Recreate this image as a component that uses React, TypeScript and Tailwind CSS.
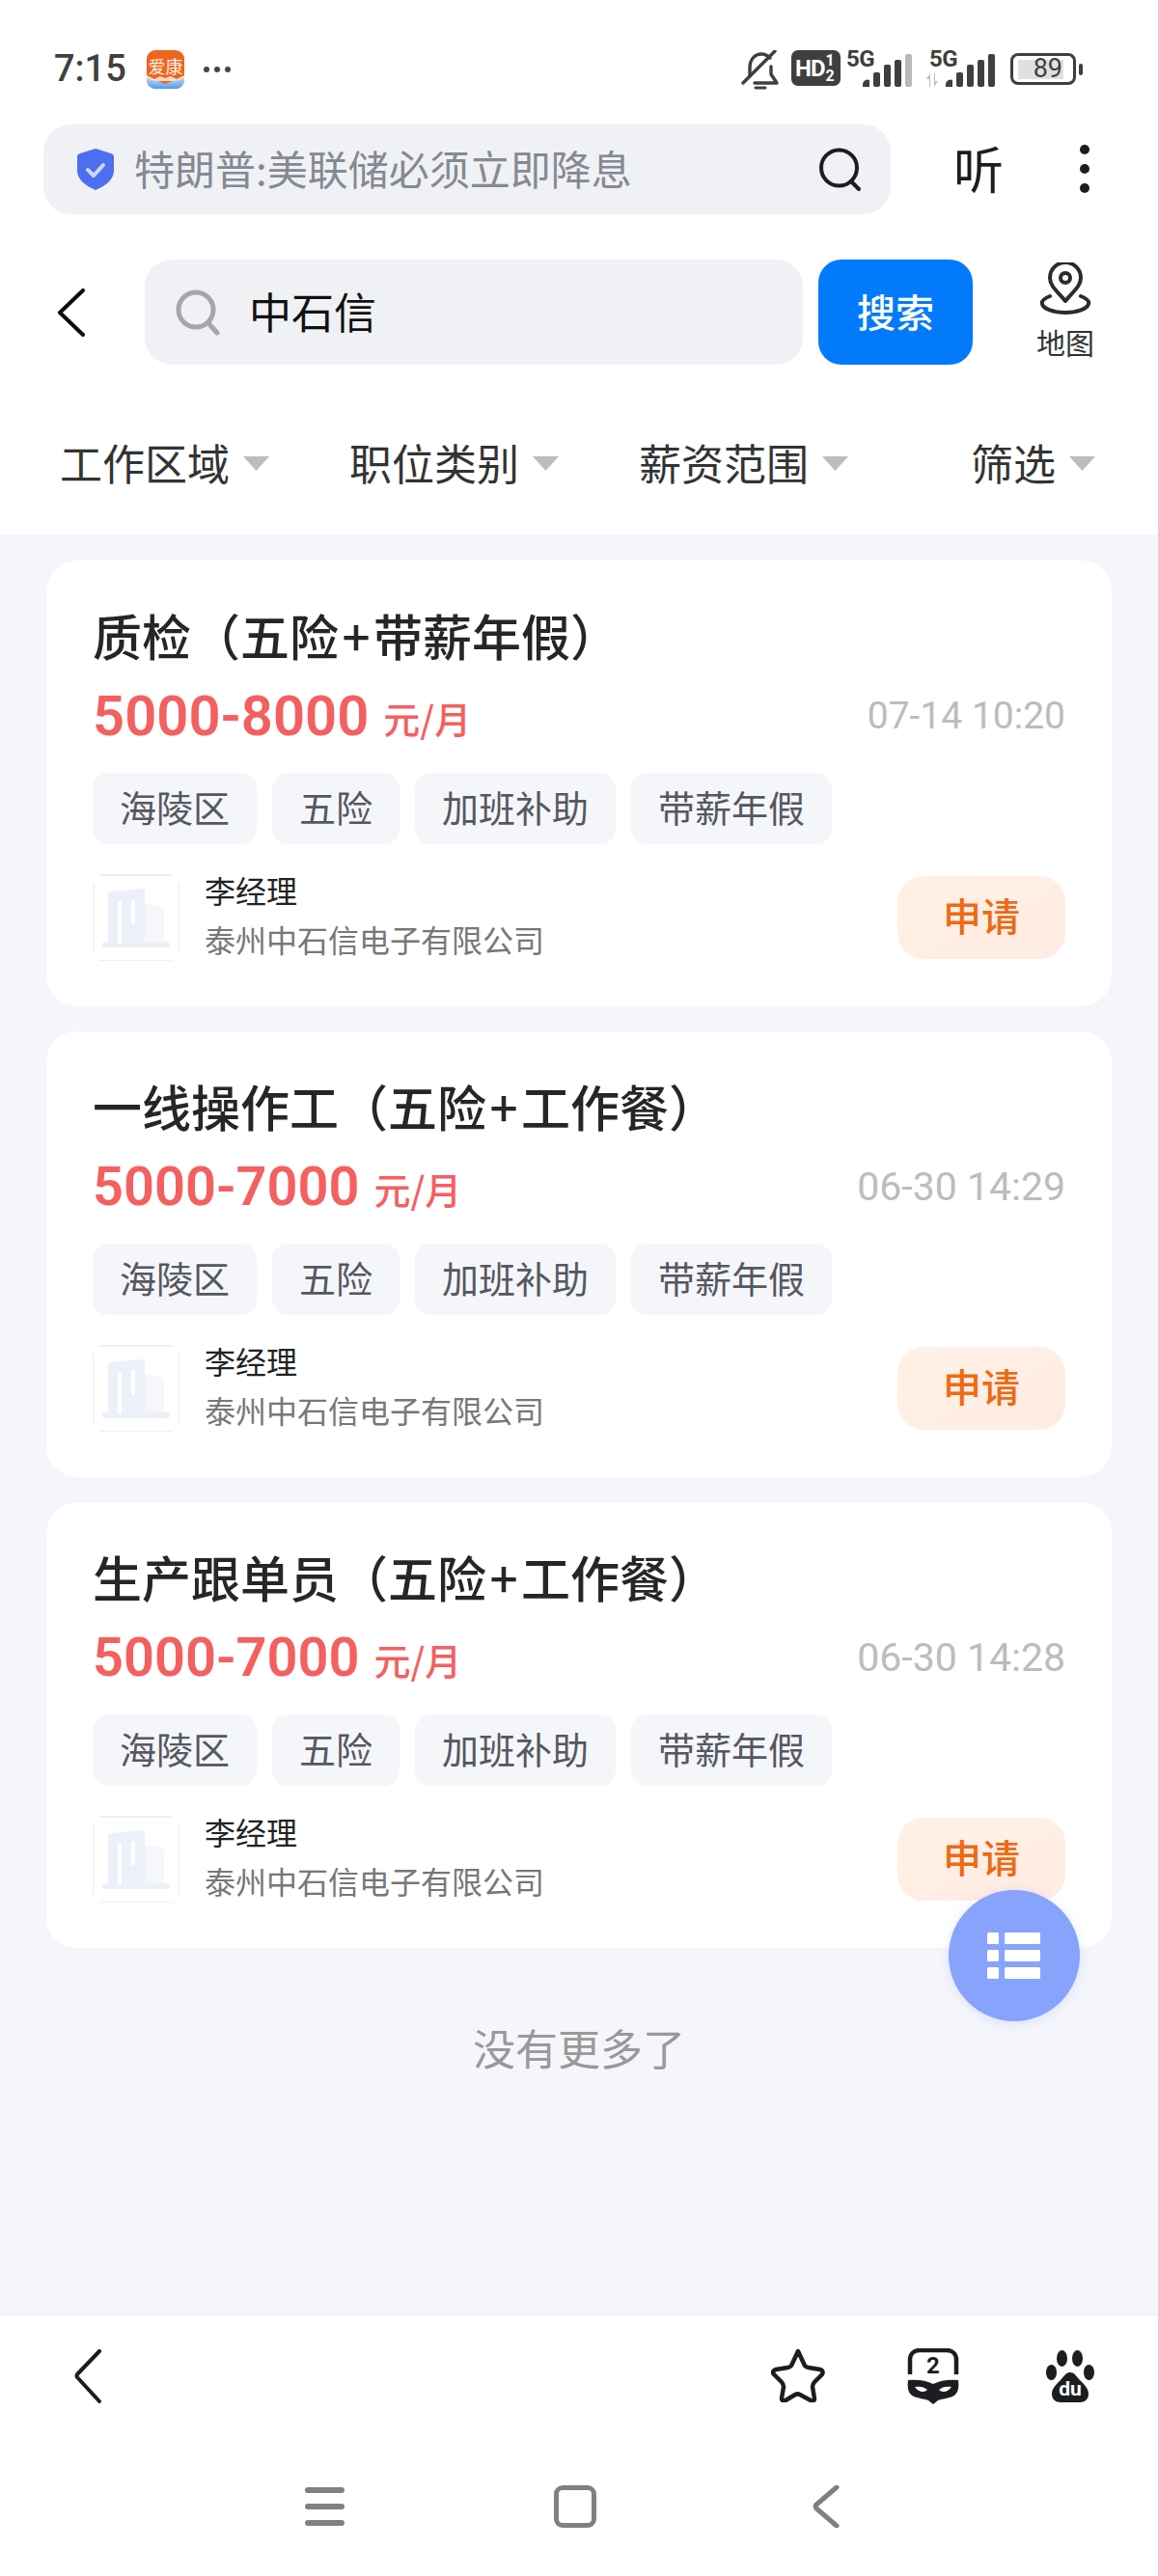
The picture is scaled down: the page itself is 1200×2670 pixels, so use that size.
const CJK = '"Noto Sans CJK SC", "Noto Sans", sans-serif';

function Bars({ dim }: { dim?: boolean }) {
  return (
    <svg width="52" height="34" viewBox="0 0 52 34" className="block">
      <path d="M0 34v-3a5 5 0 0 1 7-4v7z" fill="#3f3f3f" />
      <rect x="11" y="19" width="7" height="15" rx="2" fill="#3f3f3f" />
      <rect x="22" y="11" width="7" height="23" rx="2" fill="#3f3f3f" />
      <rect x="33" y="6" width="7" height="28" rx="2" fill="#3f3f3f" />
      <rect x="44" y="0" width="7" height="34" rx="2" fill={dim ? "#b8b8b8" : "#3f3f3f"} />
    </svg>
  );
}

function StatusBar() {
  return (
    <div className="flex h-[129px] items-start pt-[52px]">
      <span className="ml-[56px] mt-[-1px] text-[38px] leading-[40px] font-medium text-[#404040]" style={{ fontFamily: "Roboto, sans-serif" }}>7:15</span>
      <svg width="39" height="40" viewBox="0 0 39 40" className="ml-[21px]">
        <defs>
          <linearGradient id="app-b" x1="0" y1="0" x2="0" y2="1">
            <stop offset="0" stopColor="#cfe3fb" />
            <stop offset="1" stopColor="#4f9ae8" />
          </linearGradient>
        </defs>
        <rect width="39" height="40" rx="9" fill="#f0641e" />
        <path d="M0 27l19 8 20-8v4a9 9 0 0 1-9 9H9a9 9 0 0 1-9-9z" fill="url(#app-b)" />
        <path d="M0 26l8 4 6-3 5 2 6-2 6 3 8-4v3l-9 3H9l-9-3z" fill="#f7d9c8" />
        <text x="19.5" y="24" textAnchor="middle" fontSize="18" fill="#fff0e6" style={{ fontFamily: CJK }}>爱康</text>
      </svg>
      <div className="ml-[20px] mt-[17px] flex gap-[5px]">
        <span className="h-[6px] w-[6px] rounded-full bg-[#444]" />
        <span className="h-[6px] w-[6px] rounded-full bg-[#444]" />
        <span className="h-[6px] w-[6px] rounded-full bg-[#444]" />
      </div>
      <div className="ml-auto mr-[78px] flex items-start">
        <svg width="40" height="44" viewBox="0 0 40 44" fill="none" stroke="#3f3f3f" strokeWidth="3.4" strokeLinecap="round" strokeLinejoin="round">
          <path d="M9 27V18C9 10 14 4 21 4c4 0 7 2 9 4" />
          <path d="M31 17v8l6 9H14" />
          <path d="M2 34l33-33" />
          <path d="M15 39h10" strokeWidth="3" />
        </svg>
        <div className="ml-[12px] flex h-[37px] w-[51px] items-center rounded-[7px] bg-[#3f3f3f] pl-[4px] text-white" style={{ fontFamily: "Roboto, sans-serif" }}>
          <span className="text-[24px] leading-none font-bold tracking-[-1px]">HD</span>
          <span className="ml-[1px] flex flex-col text-[16px] leading-[16px] font-bold">
            <span>1</span>
            <span>2</span>
          </span>
        </div>
        <div className="relative ml-[6px] h-[38px] w-[68px]">
          <span className="absolute left-0 top-[-2px] text-[24px] leading-[22px] font-bold tracking-[-0.5px] text-[#3f3f3f]" style={{ fontFamily: "Roboto, sans-serif" }}>5G</span>
          <div className="absolute left-[17px] top-[4px]"><Bars dim /></div>
        </div>
        <div className="relative ml-[18px] h-[38px] w-[68px]">
          <span className="absolute left-0 top-[-2px] text-[24px] leading-[22px] font-bold tracking-[-0.5px] text-[#3f3f3f]" style={{ fontFamily: "Roboto, sans-serif" }}>5G</span>
          <svg width="14" height="14" viewBox="0 0 14 14" className="absolute left-[-3px] top-[24px]">
            <path d="M3 14V6H0l4-6 0 14zM9 0v8h3l-4 6V0z" fill="#bdbdbd" />
          </svg>
          <div className="absolute left-[17px] top-[4px]"><Bars /></div>
        </div>
        <div className="ml-[16px] mt-[3px] flex items-center">
          <div className="flex h-[33px] w-[68px] items-center rounded-[8px] border-[3px] border-[#3f3f3f] pl-[5px]">
            <div className="flex h-[20px] w-[47px] items-center justify-end bg-[#e0e0e0] pr-[1px] text-[27px] leading-none text-[#3f3f3f]" style={{ fontFamily: "Roboto, sans-serif" }}>89</div>
          </div>
          <span className="ml-[3px] h-[12px] w-[4px] rounded-[2px] bg-[#3f3f3f]" />
        </div>
      </div>
    </div>
  );
}

function UrlRow() {
  return (
    <div className="flex h-[93px] items-center pl-[45px]">
      <div className="flex h-[93px] w-[878px] items-center rounded-[28px] bg-[#f0f1f5] pl-[35px]">
        <svg width="38" height="43" viewBox="0 0 38 43">
          <path d="M19 0l16 5a4 4 0 0 1 3 4v14c0 9-9 16-19 20C9 39 0 32 0 23V9a4 4 0 0 1 3-4z" fill="#4e6ef2" />
          <path d="M11 22l6 6 10-11" fill="none" stroke="#cdd8ff" strokeWidth="4" strokeLinecap="round" strokeLinejoin="round" />
        </svg>
        <span className="ml-[21px] mt-[-3px] text-[42px] leading-none text-[#858993]">特朗普:美联储必须立即降息</span>
        <svg width="44" height="46" viewBox="0 0 44 46" fill="none" stroke="#1c1d21" strokeWidth="4" strokeLinecap="round" className="ml-auto mr-[30px]">
          <circle cx="20.5" cy="21" r="18.5" />
          <path d="M33 35l8 8" />
        </svg>
      </div>
      <span className="ml-[65px] mt-[-3px] text-[52px] leading-none text-[#1c1d21]">听</span>
      <div className="ml-[79px] mt-[-2px] flex flex-col gap-[10px]">
        <span className="h-[10px] w-[10px] rounded-full bg-[#1c1d21]" />
        <span className="h-[10px] w-[10px] rounded-full bg-[#1c1d21]" />
        <span className="h-[10px] w-[10px] rounded-full bg-[#1c1d21]" />
      </div>
    </div>
  );
}

function SearchRow() {
  return (
    <div className="mt-[47px] flex h-[109px] items-center">
      <svg width="30" height="50" viewBox="0 0 30 50" fill="none" stroke="#0c0c0c" strokeWidth="4" strokeLinecap="round" strokeLinejoin="round" className="ml-[59px]">
        <path d="M27 2L3 25l24 23" />
      </svg>
      <div className="ml-[61px] flex h-[109px] w-[682px] items-center rounded-[28px] bg-[#f0f1f5] pl-[32px]">
        <svg width="48" height="48" viewBox="0 0 48 48" fill="none" stroke="#a6a6a6" strokeWidth="5" strokeLinecap="round">
          <circle cx="21" cy="21" r="18" />
          <path d="M34 35l9 10" />
        </svg>
        <span className="ml-[28px] mt-[-3px] text-[44px] leading-none text-[#111]">中石信</span>
      </div>
      <div className="ml-[16px] flex h-[109px] w-[160px] items-center justify-center rounded-[24px] bg-[#037afb] pb-[4px] text-[40px] font-medium leading-none text-white">搜索</div>
      <div className="ml-[65px] mt-[-4px] flex w-[62px] flex-col items-center">
        <svg width="54" height="54" viewBox="0 0 54 54" fill="none" stroke="#2b2b2b" strokeWidth="4" strokeLinecap="round" strokeLinejoin="round">
          <path d="M27 40C20 31 11 25 11 16a16 16 0 0 1 32 0C43 25 34 31 27 40z" />
          <circle cx="27" cy="16" r="5" />
          <path d="M11 35C6 37 2 40 3 43c1 5 12 9 24 9s23-4 24-9c1-3-3-6-8-8" />
        </svg>
        <span className="mt-[11px] text-[30px] leading-[34px] text-[#333]">地图</span>
      </div>
    </div>
  );
}

function Tri() {
  return (
    <svg width="27" height="15" viewBox="0 0 27 15" className="ml-[14px] mt-[3px]">
      <path d="M0 0h27L13.5 15z" fill="#bdbdbd" />
    </svg>
  );
}

function Filters() {
  return (
    <div className="flex h-[176px] items-center pb-[3px] pl-[62px] pt-[29px] text-[44px] leading-none text-[#333]">
      <div className="flex w-[300px] items-center"><span>工作区域</span><Tri /></div>
      <div className="flex w-[300px] items-center"><span>职位类别</span><Tri /></div>
      <div className="flex w-[344px] items-center"><span>薪资范围</span><Tri /></div>
      <div className="flex items-center"><span>筛选</span><Tri /></div>
    </div>
  );
}

function Logo() {
  return (
    <svg width="90" height="90" viewBox="0 0 90 90" className="shrink-0" fill="none">
      <path d="M7 1h75M7 90h75" stroke="#ececec" strokeWidth="1.5" />
      <path d="M1 9v73M89 9v73" stroke="#f0f0f0" strokeWidth="1.5" />
      <path d="M16 22a4 4 0 0 1 3-4l32-3a3 3 0 0 1 3 3v53H16z" fill="#ecf0f9" />
      <path d="M54 30l16 3c3 1 4 3 4 6v32H54z" fill="#f6f7fb" />
      <rect x="10" y="70" width="70" height="6" rx="3" fill="#ecf0f9" />
      <rect x="26" y="28" width="4" height="44" rx="2" fill="#fff" />
      <rect x="40" y="26" width="4" height="26" rx="2" fill="#fff" />
    </svg>
  );
}

const TAGS = ["海陵区", "五险", "加班补助", "带薪年假"];

function Card({ before, after, pay, time, payCls, timeCls }: { before: string; after: string; pay: string; time: string; payCls: string; timeCls: string }) {
  return (
    <div className="h-[462px] rounded-[32px] bg-white pl-[48px] pr-[48px] pt-[47px]">
      <div className="text-[51px] leading-[60px] font-medium text-[#262626]">
        {before}
        <span className="px-[3.5px]">+</span>
        {after}
      </div>
      <div className="mt-[24px] flex h-[60px] items-center">
        <span className={"leading-none font-semibold text-[#f46060] " + payCls} style={{ fontFamily: "Roboto, sans-serif" }}>{pay}</span>
        <span className="ml-[15px] mt-[3px] text-[38px] leading-none font-medium text-[#f46060]">元/月</span>
        <span className={"ml-auto mt-[1px] leading-none text-[#bcbcbc] " + timeCls} style={{ fontFamily: "Roboto, sans-serif" }}>{time}</span>
      </div>
      <div className="mt-[29px] flex gap-[16px]">
        {TAGS.map((t) => (
          <span key={t} className="flex h-[74px] items-center rounded-[16px] bg-[#f5f6fa] px-[28px] pb-[4px] text-[38px] leading-none text-[#55585f]">{t}</span>
        ))}
      </div>
      <div className="mt-[31px] flex h-[90px] items-center">
        <Logo />
        <div className="ml-[26px] mt-[-8px] flex flex-col">
          <span className="text-[32px] leading-[36px] text-[#222]">李经理</span>
          <span className="mt-[15px] text-[32px] leading-[36px] text-[#777]">泰州中石信电子有限公司</span>
        </div>
        <div className="ml-auto flex h-[86px] w-[174px] items-center justify-center rounded-[27px] bg-gradient-to-br from-[#fff1e6] to-[#ffebe2] pb-[6px] text-[40px] leading-none font-medium text-[#ee6a14]">申请</div>
      </div>
    </div>
  );
}

function Toolbar() {
  return (
    <div className="flex h-[128px] items-center border-t border-[#e9e9ec] pl-[76px] pr-[66px]">
      <svg width="30" height="56" viewBox="0 0 30 56" fill="none" stroke="#1c1d21" strokeWidth="4" strokeLinecap="round" strokeLinejoin="round" className="mt-[-2px]">
        <path d="M27 2L4 26a3 3 0 0 0 0 3l23 25" />
      </svg>
      <svg width="56" height="56" viewBox="0 0 56 56" fill="none" stroke="#1c1d21" strokeWidth="4.5" strokeLinejoin="round" className="ml-auto mr-[-3px] mt-[-4px]">
        <path d="M28 3l7 15c1 1 2 2 4 2l12 2c3 1 3 3 2 5l-8 8c-2 2-2 3-2 5l2 12c0 3-2 3-4 2l-11-6c-2-1-3-1-5 0l-10 6c-3 1-4 0-4-2l2-12c0-2 0-3-2-5l-8-8c-2-2-1-4 2-5l12-2c2 0 3-1 4-2z" />
      </svg>
      <svg width="54" height="58" viewBox="0 0 54 58" className="ml-[88px] mt-[-2px]">
        <path d="M3 27V12C3 6 7 2 13 2h28c6 0 10 4 10 10v15" fill="none" stroke="#1c1d21" strokeWidth="4.5" />
        <text x="27" y="26" textAnchor="middle" fontSize="24" fontWeight="700" fill="#1c1d21" style={{ fontFamily: "Roboto, sans-serif" }}>2</text>
        <path d="M1 33c9-1 19 0 26 4 7-4 17-5 26-4 1 8 0 14-6 17-6 2-13 3-15 4l-5 4-5-4c-2-1-9-2-15-4C1 47 0 41 1 33z" fill="#1c1d21" />
        <path d="M8 40c5-1 10 0 13 3-3 3-9 3-13-3zM46 40c-5-1-10 0-13 3 3 3 9 3 13-3z" fill="#fff" />
      </svg>
      <svg width="50" height="54" viewBox="0 0 50 54" className="ml-[90px] mt-[-2px]">
        <ellipse cx="16.5" cy="8.5" rx="5.5" ry="8.5" fill="#1c1d21" />
        <ellipse cx="32.5" cy="8.5" rx="5.5" ry="8.5" fill="#1c1d21" />
        <ellipse cx="5.5" cy="23" rx="5.5" ry="8" fill="#1c1d21" />
        <ellipse cx="44.5" cy="23" rx="5.5" ry="8" fill="#1c1d21" />
        <path d="M25 23c5 0 7 5 10 8 5 5 9 9 9 14 0 6-4 9-9 9H15c-5 0-9-3-9-9 0-5 4-9 9-14 3-3 5-8 10-8z" fill="#1c1d21" />
        <text x="25" y="47" textAnchor="middle" fontSize="21" fontWeight="700" fill="#fff" style={{ fontFamily: "Roboto, sans-serif" }}>du</text>
      </svg>
    </div>
  );
}

function NavBar() {
  return (
    <div className="flex h-[143px] items-center pb-[2px]">
      <div className="ml-[316px] flex w-[41px] flex-col gap-[11px]">
        <span className="h-[6px] rounded-[3px] bg-[#808080]" />
        <span className="h-[6px] rounded-[3px] bg-[#808080]" />
        <span className="h-[6px] rounded-[3px] bg-[#808080]" />
      </div>
      <div className="ml-[217px] h-[44px] w-[44px] rounded-[9px] border-[5px] border-[#808080]" />
      <svg width="28" height="44" viewBox="0 0 28 44" fill="none" stroke="#808080" strokeWidth="5" strokeLinecap="round" strokeLinejoin="round" className="ml-[224px]">
        <path d="M25 2L4 20a3 3 0 0 0 0 4l21 18" />
      </svg>
    </div>
  );
}

export default function App() {
  return (
    <div className="relative flex h-[2670px] w-[1200px] flex-col overflow-hidden bg-white" style={{ fontFamily: CJK }}>
      <StatusBar />
      <UrlRow />
      <SearchRow />
      <Filters />
      <main className="flex flex-1 flex-col gap-[26px] bg-[#f5f6fb] px-[48px] pt-[27px]">
        <Card before="质检（五险" after="带薪年假）" pay="5000-8000" time="07-14 10:20" payCls="text-[58px]" timeCls="text-[39px]" />
        <Card before="一线操作工（五险" after="工作餐）" pay="5000-7000" time="06-30 14:29" payCls="text-[56px]" timeCls="text-[41px]" />
        <Card before="生产跟单员（五险" after="工作餐）" pay="5000-7000" time="06-30 14:28" payCls="text-[56px]" timeCls="text-[41px]" />
        <div className="mt-[50px] text-center text-[44px] leading-[54px] text-[#999]">没有更多了</div>
      </main>
      <Toolbar />
      <NavBar />
      <div className="absolute left-[983px] top-[1959px] flex h-[136px] w-[136px] items-center justify-center rounded-full bg-[#88a3fb] shadow-[0_2px_12px_rgba(136,163,251,0.25)]">
        <svg width="56" height="48" viewBox="0 0 56 48" fill="#fff">
          <rect x="0" y="0" width="12" height="12" rx="1.5" />
          <rect x="18" y="0" width="37" height="12" rx="1.5" />
          <rect x="0" y="18" width="12" height="12" rx="1.5" />
          <rect x="18" y="18" width="37" height="12" rx="1.5" />
          <rect x="0" y="36" width="12" height="12" rx="1.5" />
          <rect x="18" y="36" width="37" height="12" rx="1.5" />
        </svg>
      </div>
    </div>
  );
}
